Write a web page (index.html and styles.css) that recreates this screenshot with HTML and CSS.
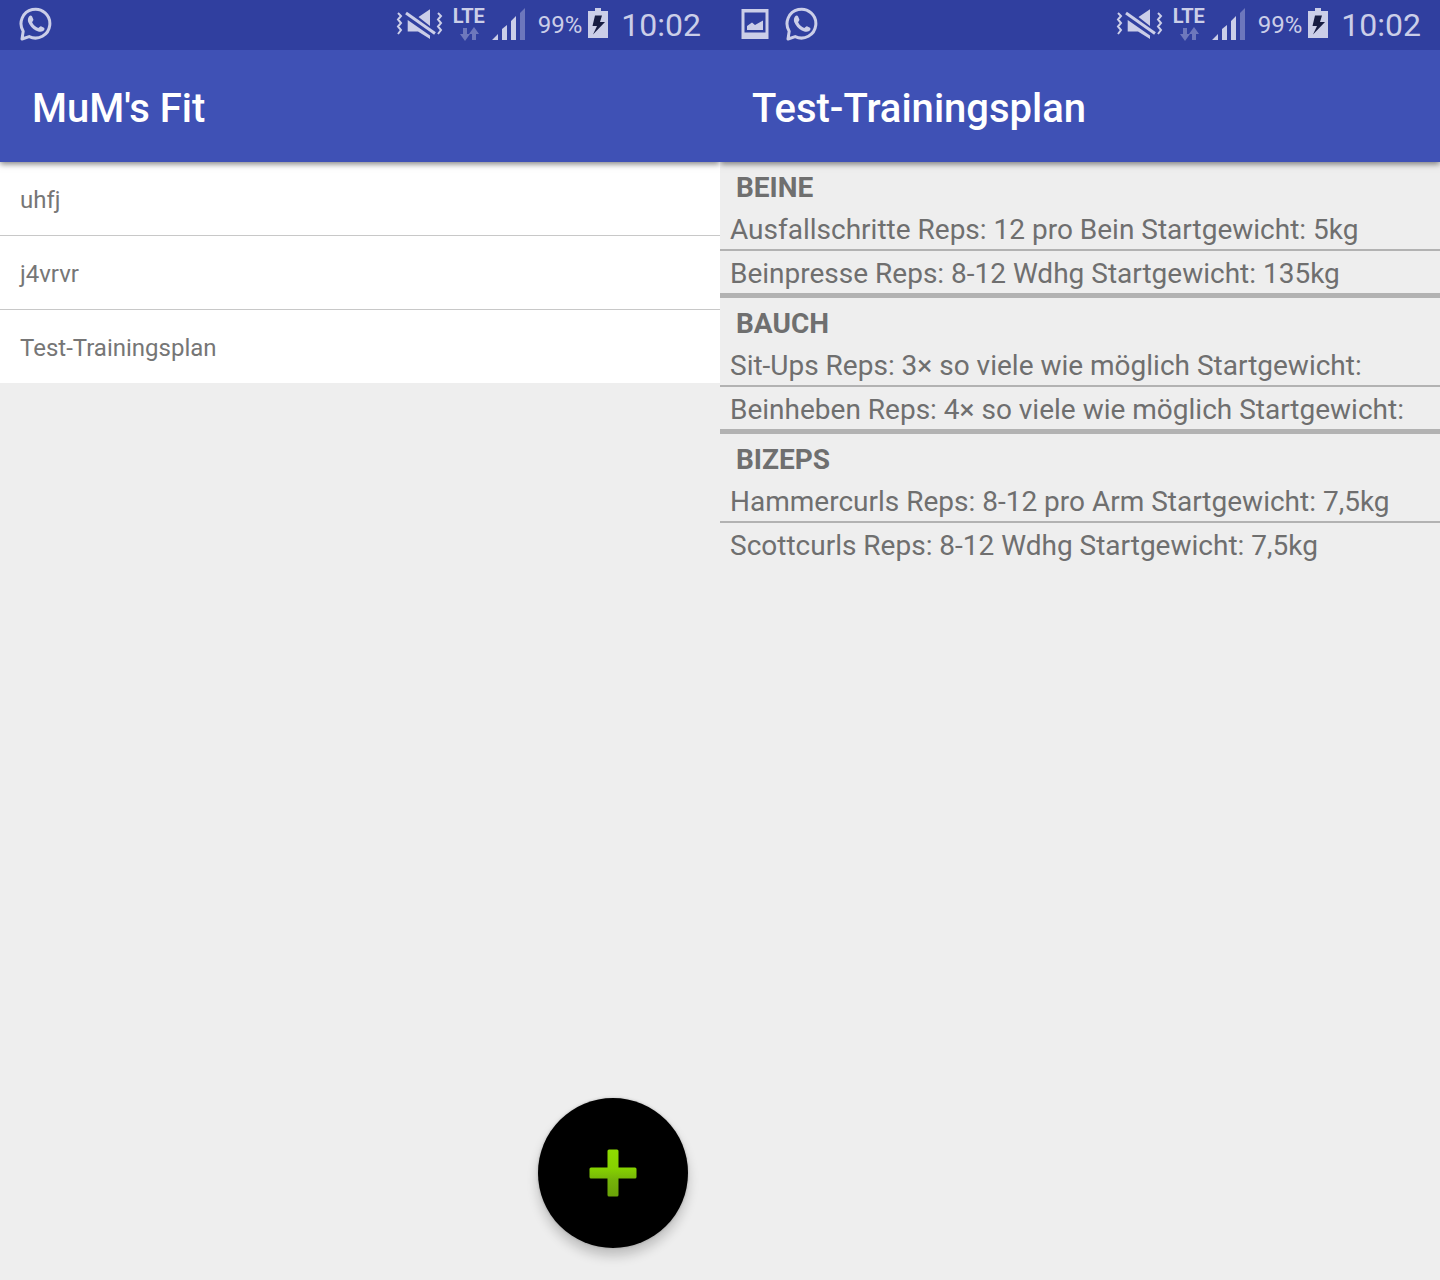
FILE: index.html
```html
<!DOCTYPE html>
<html lang="de">
<head>
<meta charset="utf-8">
<meta name="viewport" content="width=device-width, initial-scale=1">
<title>MuM's Fit</title>
<link rel="stylesheet" href="styles.css">
</head>
<body>
<svg class="symbols" aria-hidden="true">
  <symbol id="chat" viewBox="0 0 34 36">
    <path d="M4.2 25.2A14.4 14.4 0 1 1 10.2 30.6L3 33Z" fill="none" stroke="currentColor" stroke-width="3" stroke-linejoin="round"/>
    <path d="M10 10.5C11 9.200 12.400 9.300 13 10.300L14.400 13.500C14.600 14.500 13.200 15.600 13.100 16.200C14.400 19 16.600 20.900 19.300 22C20.200 21.800 21 20.100 22 20.300L25 21.800C26 22.700 25.400 24.200 24.200 25C22.200 26.300 19.800 26 16.800 24.500C13.500 22.800 10.600 19.400 9.200 16C8.600 14 8.900 12 10 10.500Z" fill="currentColor"/>
  </symbol>
  <symbol id="picture" viewBox="0 0 28 30">
    <path d="M.5 0H27.500V30H.5ZM3.500 3.500V23.500H24.500V3.500Z" fill="currentColor" fill-rule="evenodd"/>
    <path d="M6 21V17L11 13.500L14 16L22 11.500V21Z" fill="currentColor"/>
  </symbol>
  <symbol id="mute" viewBox="0 0 48 32">
    <path d="M2 5L5 8L2 11.500L5 15L2 18.500L5 22L2 26M42 5L45 8L42 11.500L45 15L42 18.500L45 22L42 26" fill="none" stroke="currentColor" stroke-width="2"/>
    <path d="M22.500 9L34 1.300V18ZM11.700 12L34 27.500V31L22 23.500H11.700Z" fill="currentColor"/>
    <path d="M10 5L39 25.500" fill="none" stroke="#303f9f" stroke-width="5"/>
    <path d="M10 5L39 25.500" fill="none" stroke="currentColor" stroke-width="3"/>
  </symbol>
  <symbol id="transfer" viewBox="0 0 20 14">
    <path d="M4 1H8V7H11L6 14L1 7H4ZM13 13V7H10L15 0L20 7H17V13Z" fill="currentColor"/>
  </symbol>
  <symbol id="signal" viewBox="0 0 34 35">
    <path d="M0 33L6 27V33ZM10 33V22L15 18V33ZM19 33V14L24 9V33Z" fill="currentColor"/>
    <path d="M28 33V6L33 1V33Z" fill="currentColor" opacity=".4"/>
  </symbol>
  <symbol id="battery" viewBox="0 0 20 32">
    <path d="M7 0H13V3H20V30H0V3H7Z" fill="currentColor"/>
    <path d="M7 7.500H14L12 14H17L5 26.500L9 18H4.500Z" fill="#171c42"/>
  </symbol>
</svg>
<div class="screens">
  <section class="screen">
    <div class="status">
      <div class="notices">
        <svg class="chat"><use href="#chat"/></svg>
      </div>
      <svg class="mute"><use href="#mute"/></svg>
      <div class="network"><span>LTE</span><svg class="transfer"><use href="#transfer"/></svg></div>
      <svg class="signal"><use href="#signal"/></svg>
      <span class="charge">99%</span>
      <svg class="battery"><use href="#battery"/></svg>
      <time class="clock">10:02</time>
    </div>
    <header class="toolbar"><h1>MuM's Fit</h1></header>
    <main>
      <ul class="plans">
        <li><a href="#plan">uhfj</a></li>
        <li><a href="#plan">j4vrvr</a></li>
        <li><a href="#plan">Test-Trainingsplan</a></li>
      </ul>
    </main>
    <button class="fab" type="button" aria-label="Plan hinzufügen">
      <svg class="plus" viewBox="0 0 48 48">
        <defs>
          <linearGradient id="green" x1="0" y1="0" x2="0" y2="1">
            <stop offset="0" stop-color="#8edb00"/>
            <stop offset=".4" stop-color="#86d200"/>
            <stop offset=".65" stop-color="#75b40a"/>
            <stop offset="1" stop-color="#6aa208"/>
          </linearGradient>
        </defs>
        <path d="M20 .5H28Q29.500 .5 29.500 2V18.500H46Q47.500 18.500 47.500 20V28Q47.500 29.500 46 29.500H29.500V46Q29.500 47.500 28 47.500H20Q18.500 47.500 18.500 46V29.500H2Q.5 29.500 .5 28V20Q.5 18.500 2 18.500H18.500V2Q18.500 .5 20 .5Z" fill="url(#green)"/>
      </svg>
    </button>
  </section>
  <section class="screen" id="plan">
    <div class="status">
      <div class="notices">
        <svg class="picture"><use href="#picture"/></svg>
        <svg class="chat"><use href="#chat"/></svg>
      </div>
      <svg class="mute"><use href="#mute"/></svg>
      <div class="network"><span>LTE</span><svg class="transfer"><use href="#transfer"/></svg></div>
      <svg class="signal"><use href="#signal"/></svg>
      <span class="charge">99%</span>
      <svg class="battery"><use href="#battery"/></svg>
      <time class="clock">10:02</time>
    </div>
    <header class="toolbar"><h1>Test-Trainingsplan</h1></header>
    <main>
      <section class="group">
        <h2>BEINE</h2>
        <ul>
          <li>Ausfallschritte Reps: 12 pro Bein Startgewicht: 5kg</li>
          <li>Beinpresse Reps: 8-12 Wdhg Startgewicht: 135kg</li>
        </ul>
      </section>
      <section class="group">
        <h2>BAUCH</h2>
        <ul>
          <li>Sit-Ups Reps: 3× so viele wie möglich Startgewicht:</li>
          <li>Beinheben Reps: 4× so viele wie möglich Startgewicht:</li>
        </ul>
      </section>
      <section class="group">
        <h2>BIZEPS</h2>
        <ul>
          <li>Hammercurls Reps: 8-12 pro Arm Startgewicht: 7,5kg</li>
          <li>Scottcurls Reps: 8-12 Wdhg Startgewicht: 7,5kg</li>
        </ul>
      </section>
    </main>
  </section>
</div>
</body>
</html>
```
FILE: styles.css
```css
* {
  box-sizing: border-box;
}

body {
  margin: 0;
  background: #eee;
  color: #6f6f6f;
  font-family: Roboto, "Noto Sans", sans-serif;
}

h1, h2, ul {
  margin: 0;
  padding: 0;
}

ul {
  list-style: none;
}

svg {
  display: block;
  flex: none;
}

.symbols {
  position: absolute;
  width: 0;
  height: 0;
}

.screens {
  display: grid;
  grid-template-columns: 1fr 1fr;
  min-height: 100vh;
}

.screen {
  position: relative;
}

.status {
  display: flex;
  align-items: center;
  height: 50px;
  padding: 0 19px 2px;
  background: #303f9f;
  color: #cbcee8;
}

.notices {
  display: flex;
  flex: 1;
  align-items: center;
  gap: 16px;
}

.chat {
  width: 34px;
  height: 36px;
}

.picture {
  width: 28px;
  height: 30px;
  margin-left: 2px;
}

.mute {
  width: 48px;
  height: 32px;
  margin-right: 8px;
}

.network {
  display: flex;
  flex-direction: column;
  align-items: center;
  gap: 2px;
  width: 34px;
  margin-right: 6px;
  font-size: 20px;
  font-weight: 700;
  line-height: 18px;
}

.transfer {
  width: 20px;
  height: 14px;
  opacity: .4;
}

.signal {
  width: 34px;
  height: 35px;
  margin-right: 12px;
}

.charge {
  margin-right: 6px;
  padding-top: 2px;
  font-size: 24px;
}

.battery {
  width: 20px;
  height: 32px;
  margin-right: 13px;
}

.clock {
  padding-top: 2px;
  font-size: 32px;
}

.toolbar {
  position: relative;
  display: flex;
  align-items: center;
  height: 112px;
  padding: 4px 32px 0;
  background: #3f51b5;
  color: #fff;
  box-shadow: 0 2px 6px rgba(0, 0, 0, .5);
  clip-path: inset(0 0 -12px 0);
}

.toolbar h1 {
  font-size: 40px;
  font-weight: 500;
}

.plans {
  background: #fff;
  font-size: 24px;
  line-height: 28px;
}

.plans li + li {
  border-top: 1px solid #c8c8c8;
}

.plans a {
  display: block;
  padding: 24px 20px 21px;
  color: #767676;
  text-decoration: none;
}

.group {
  font-size: 28px;
}

.group + .group {
  border-top: 5px solid #b2b2b2;
}

.group h2 {
  padding: 8px 16px 1px;
  font-size: 28px;
  font-weight: 700;
  line-height: 36px;
}

.group li {
  padding: 5px 10px 1px;
  line-height: 36px;
}

.group li + li {
  border-top: 2px solid #b2b2b2;
}

.fab {
  position: absolute;
  right: 32px;
  bottom: 32px;
  display: grid;
  place-items: center;
  width: 150px;
  height: 150px;
  padding: 0;
  border: 0;
  border-radius: 50%;
  background: #000;
  box-shadow: 0 8px 12px rgba(0, 0, 0, .2), 0 0 3px rgba(0, 0, 0, .2);
  cursor: pointer;
}

.plus {
  width: 48px;
  height: 48px;
}
```
